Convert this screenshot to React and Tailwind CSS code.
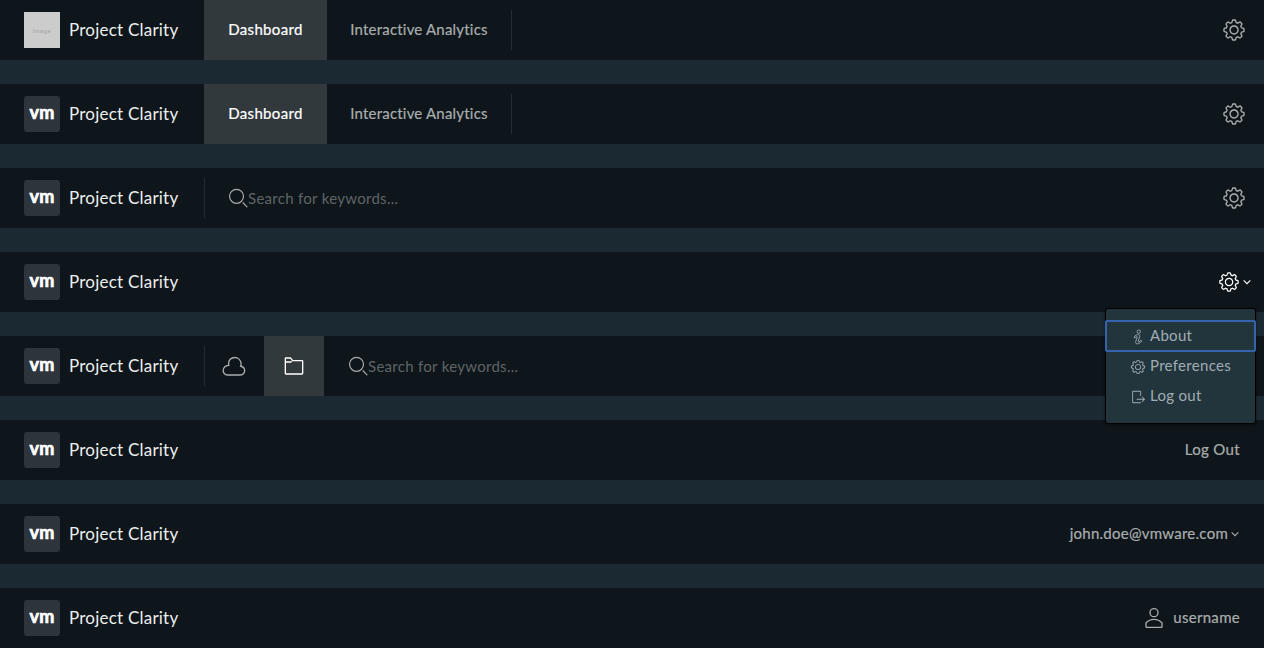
const FONT = "font-['Lato','Open_Sans',sans-serif]";

function Icon({ className, children }) {
  return (
    <svg viewBox="0 0 36 36" fill="currentColor" aria-hidden="true" className={`shrink-0 ${className}`}>
      {children}
    </svg>
  );
}

const Cog = ({ className }) => (
  <Icon className={className}>
    <path d="M18.1,11c-3.9,0-7,3.1-7,7s3.1,7,7,7c3.9,0,7-3.1,7-7S22,11,18.1,11z M18.1,23c-2.8,0-5-2.2-5-5s2.2-5,5-5c2.8,0,5,2.2,5,5S20.9,23,18.1,23z" />
    <path d="M32.8,14.7L30,13.8l-0.6-1.5l1.4-2.6c0.3-0.6,0.2-1.4-0.3-1.9l-2.4-2.4c-0.5-0.5-1.3-0.6-1.9-0.3l-2.6,1.4l-1.5-0.6l-0.9-2.8C21,2.5,20.4,2,19.7,2h-3.4c-0.7,0-1.3,0.5-1.4,1.2L14,6c-0.6,0.1-1.1,0.3-1.6,0.6L9.8,5.2C9.2,4.9,8.4,5,7.9,5.5L5.5,7.9C5,8.4,4.9,9.2,5.2,9.8l1.3,2.5c-0.2,0.5-0.4,1.1-0.6,1.6l-2.8,0.9C2.5,15,2,15.6,2,16.3v3.4c0,0.7,0.5,1.3,1.2,1.5L6,22.1l0.6,1.5l-1.4,2.6c-0.3,0.6-0.2,1.4,0.3,1.9l2.4,2.4c0.5,0.5,1.3,0.6,1.9,0.3l2.6-1.4l1.5,0.6l0.9,2.9c0.2,0.6,0.8,1.1,1.5,1.1h3.4c0.7,0,1.3-0.5,1.5-1.1l0.9-2.9l1.5-0.6l2.6,1.4c0.6,0.3,1.4,0.2,1.9-0.3l2.4-2.4c0.5-0.5,0.6-1.3,0.3-1.9l-1.4-2.6l0.6-1.5l2.9-0.9c0.6-0.2,1.1-0.8,1.1-1.5v-3.4C34,15.6,33.5,14.9,32.8,14.7z M32,19.4l-3.6,1.1L28.3,21c-0.3,0.7-0.6,1.4-0.9,2.1l-0.3,0.5l1.8,3.3l-2,2l-3.3-1.8l-0.5,0.3c-0.7,0.4-1.4,0.7-2.1,0.9l-0.5,0.1L19.4,32h-2.8l-1.1-3.6L15,28.3c-0.7-0.3-1.4-0.6-2.1-0.9l-0.5-0.3l-3.3,1.8l-2-2l1.8-3.3l-0.3-0.5c-0.4-0.7-0.7-1.4-0.9-2.1l-0.1-0.5L4,19.4v-2.8l3.4-1l0.2-0.5c0.2-0.8,0.5-1.5,0.9-2.2l0.3-0.5L7.1,9.1l2-2l3.2,1.8l0.5-0.3c0.7-0.4,1.4-0.7,2.2-0.9l0.5-0.2L16.6,4h2.8l1.1,3.5L21,7.7c0.7,0.2,1.4,0.5,2.1,0.9l0.5,0.3l3.3-1.8l2,2l-1.8,3.3l0.3,0.5c0.4,0.7,0.7,1.4,0.9,2.1l0.1,0.5l3.6,1.1V19.4z" />
  </Icon>
);

const SearchIcon = ({ className }) => (
  <Icon className={className}>
    <path d="M16.33,5.05A10.95,10.95,0,1,1,5.39,16,11,11,0,0,1,16.33,5.05m0-2.05a13,13,0,1,0,13,13,13,13,0,0,0-13-13Z" />
    <path d="M35,33.29l-7.37-7.42-1.42,1.41,7.37,7.42A1,1,0,1,0,35,33.29Z" />
  </Icon>
);

const Cloud = ({ className }) => (
  <Icon className={className}>
    <path
      fill="none"
      stroke="currentColor"
      strokeWidth="2"
      d="M8.2 31.5H27.8A6.2 6.2 0 0 0 34 25.3C34 21.6 31.6 19 28 18.4C28.6 17.2 28.8 15.8 28.6 14.2C28 9 24 5.2 19 5.2C13.5 5.2 9.8 9.4 9.8 14.6C9.8 15.5 9.9 16.3 10.2 17C5.2 17.4 1.8 20.6 1.8 25.2A6.3 6.3 0 0 0 8.2 31.5Z"
    />
  </Icon>
);

const Folder = ({ className }) => (
  <Icon className={className}>
    <path d="M30,9H16.42L14.11,5.82A2,2,0,0,0,12.49,5H6A2,2,0,0,0,4,7V29a2,2,0,0,0,2,2H30a2,2,0,0,0,2-2V11A2,2,0,0,0,30,9Zm0,20H6V13h7.31a2,2,0,0,0,2-2H6V7h6.49l2.61,3.59a1,1,0,0,0,.81.41H30Z" />
  </Icon>
);

const User = ({ className }) => (
  <Icon className={className}>
    <path d="M18,17a7,7,0,1,0-7-7A7,7,0,0,0,18,17ZM18,5a5,5,0,1,1-5,5A5,5,0,0,1,18,5Z" />
    <path d="M30.47,24.37a17.16,17.16,0,0,0-24.93,0A2,2,0,0,0,5,25.74V31a2,2,0,0,0,2,2H29a2,2,0,0,0,2-2V25.74A2,2,0,0,0,30.47,24.37ZM29,31H7V25.73a15.17,15.17,0,0,1,22,0h0Z" />
  </Icon>
);

const Info = ({ className }) => (
  <Icon className={className}>
    <g fill="none" stroke="currentColor" strokeWidth="2" strokeLinejoin="round">
      <circle cx="19.8" cy="6" r="3.8" />
      <path d="M9 18.5C11.5 14.5 15.5 12.3 19 12.6C22 12.9 22.2 15.5 21.4 18L18.3 27.5C17.9 29 18.6 29.6 20 29C21.6 28.3 23 27 24.4 25.2L26.2 26.6C24 30.8 20 33.6 16 33.4C12.8 33.2 12 30.7 12.9 28L16 18.8C16.4 17.2 15.8 16.7 14.6 17.3C13.2 18 12 19 11 20.2Z" />
    </g>
  </Icon>
);

const LogoutIcon = ({ className }) => (
  <Icon className={className}>
    <path d="M7,6H23v9.8h2V6a2,2,0,0,0-2-2H7A2,2,0,0,0,5,6V30a2,2,0,0,0,2,2H23a2,2,0,0,0,2-2H7Z" />
    <path d="M28.16,17.28a1,1,0,0,0-1.41,1.41L30.13,22H15.63a1,1,0,0,0-1,1,1,1,0,0,0,1,1h14.5l-3.38,3.46a1,1,0,1,0,1.41,1.41L34,23.07Z" />
  </Icon>
);

const Caret = ({ className }) => (
  <Icon className={className}>
    <path fill="none" stroke="currentColor" strokeWidth="4" d="M6 12.5L18 24L30 12.5" />
  </Icon>
);

function Header({ placeholder, children }) {
  return (
    <header className="flex h-15 shrink-0 bg-[#0e161b] text-[#a9adae]">
      <div className="flex w-51 shrink-0 items-center pl-6">
        {placeholder ? (
          <span className="flex size-9 items-center justify-center bg-[#cccccc] pt-px font-['Liberation_Sans',sans-serif] text-[6px] leading-none tracking-[0.4px] text-[#a0a0a0]">
            Image
          </span>
        ) : (
          <span className="flex size-9 items-center justify-center rounded-[3px] bg-[#2e343b] pb-[4px] text-[18px] leading-none font-bold tracking-[0.2px] text-white [-webkit-text-stroke:0.7px_white]">
            vm
          </span>
        )}
        <span className="ml-[9px] pb-px text-[17px] leading-6 tracking-[0.22px] whitespace-nowrap text-[#eceeee]">
          Project Clarity
        </span>
      </div>
      {children}
    </header>
  );
}

const Divider = () => <span className="my-2.5 w-px shrink-0 bg-[#252d32]" />;

const Tabs = () => (
  <nav className="flex text-[15px] leading-5 whitespace-nowrap [-webkit-text-stroke:0.2px]">
    <a className="flex w-[123px] items-center justify-center bg-[#32393c] pb-0.5 tracking-[0.35px] text-white">Dashboard</a>
    <a className="flex w-46 items-center justify-center pb-0.5 tracking-[0.2px]">Interactive Analytics</a>
    <Divider />
  </nav>
);

const Settings = () => (
  <button className="ml-auto flex w-15 items-center justify-center">
    <Cog className="size-6" />
  </button>
);

const Search = () => (
  <label className="flex items-center pl-[22px]">
    <SearchIcon className="mb-px size-[21px]" />
    <span className="text-[15px] leading-5 tracking-[0.29px] text-[#5f6467]">Search for keywords...</span>
  </label>
);

const MENU = [
  { label: "About", icon: Info, focused: true },
  { label: "Preferences", icon: Cog },
  { label: "Log out", icon: LogoutIcon },
];

const Menu = () => (
  <div className="absolute top-14 right-2 z-10 h-[116px] w-[151px] rounded-[3px] border border-black bg-[#22343c] py-3 text-[#a0adb3] shadow-[0_1px_3px_#00000080]">
    {MENU.map(({ label, icon: Glyph, focused }) => (
      <div
        key={label}
        className={`flex h-[30px] items-center pl-6 text-[15px] leading-5 tracking-[0.3px] ${focused ? "rounded-[1px] outline-2 -outline-offset-1 outline-[#3664ac]" : ""}`}
      >
        <Glyph className="mt-0.5 size-4" />
        <span className="ml-1 pb-0.5">{label}</span>
      </div>
    ))}
  </div>
);

const LINK = "ml-auto flex items-center pr-6 text-[15px] leading-5 [-webkit-text-stroke:0.2px]";

export default function App() {
  return (
    <main className={`flex h-[648px] w-[1264px] flex-col gap-6 overflow-hidden bg-[#1b2a32] ${FONT}`}>
      <Header placeholder>
        <Tabs />
        <Settings />
      </Header>
      <Header>
        <Tabs />
        <Settings />
      </Header>
      <Header>
        <Divider />
        <Search />
        <Settings />
      </Header>
      <Header>
        <div className="relative ml-auto flex items-center pr-3 text-white">
          <Cog className="size-[22px]" />
          <Caret className="ml-[2px] size-2.5" />
          <Menu />
        </div>
      </Header>
      <Header>
        <Divider />
        <a className="flex w-[59px] items-center justify-center pr-px">
          <Cloud className="size-6" />
        </a>
        <a className="flex w-15 items-center justify-center bg-[#32393c] text-white">
          <Folder className="size-6" />
        </a>
        <div className="flex pl-px">
          <Search />
        </div>
      </Header>
      <Header>
        <a className={`${LINK} tracking-[0.33px]`}>
          <span className="pb-0.5">Log Out</span>
        </a>
      </Header>
      <Header>
        <a className={`${LINK} tracking-[0.26px]`}>
          <span className="pb-0.5">john.doe@vmware.com</span>
          <Caret className="ml-[2px] size-2.5" />
        </a>
      </Header>
      <Header>
        <a className={`${LINK} tracking-[0.3px]`}>
          <User className="mr-[7px] size-6" />
          <span className="pb-0.5">username</span>
        </a>
      </Header>
    </main>
  );
}
